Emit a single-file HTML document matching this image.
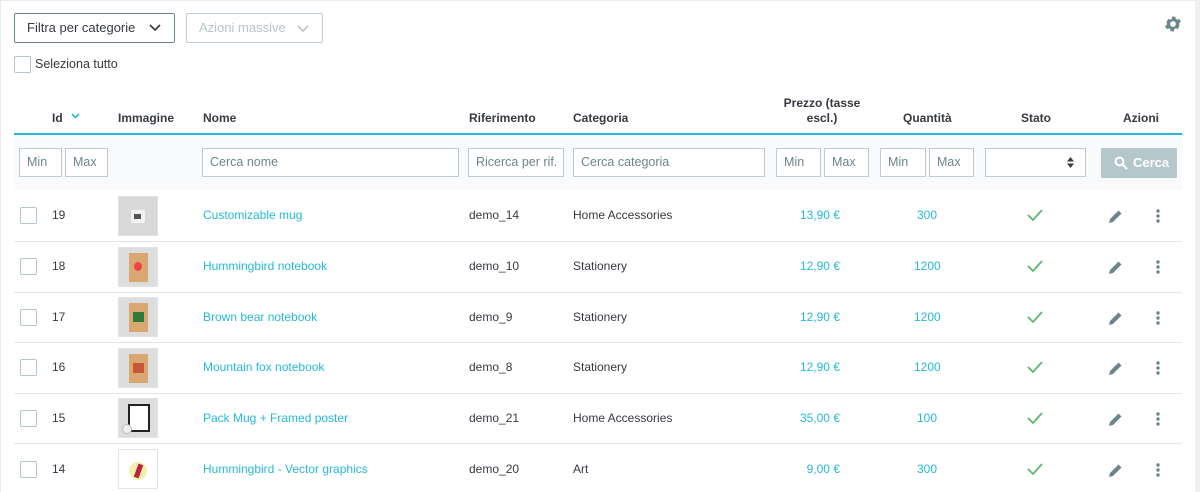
<!DOCTYPE html>
<html><head><meta charset="utf-8"><style>
*{box-sizing:border-box;margin:0;padding:0}
body{width:1200px;height:492px;overflow:hidden;background:#fff;font-family:"Liberation Sans",sans-serif;font-size:12px;color:#363a41;position:relative}
.a{position:absolute;white-space:nowrap}
.inp{position:absolute;height:29px;border:1px solid #bbcdd2;background:#fff;color:#6c868e;font-size:12.5px;padding-left:7px;line-height:27px}
.th{position:absolute;font-weight:bold;font-size:12px;color:#363a41}
.cb{position:absolute;width:17px;height:17px;border:1px solid #b3c7cd;border-radius:2px;background:#fff}
.lk{color:#25b9d7}
.pr{position:absolute;left:760px;width:80px;text-align:right;color:#25b9d7}
.sep{position:absolute;left:14px;width:1168px;height:1px;background:#dfe4e7}
.th2{position:absolute;left:118px;width:40px;height:40px;border:1px solid #dfe4e7;background:#ddd}
</style></head><body>
<div class="a" style="left:0;top:0;width:1200px;height:1px;background:#e8eaec"></div>
<div class="a" style="left:0;top:0;width:1px;height:492px;background:#e8eaec"></div>
<div class="a" style="left:1195px;top:0;width:5px;height:492px;background:#eef0f2"></div>

<div class="a" style="left:14px;top:13px;width:161px;height:30px;border:1px solid #6c868e;border-radius:2px;line-height:28px;padding-left:12px;font-size:13px;color:#363a41">Filtra per categorie</div>
<svg class="a" style="left:149px;top:24px" width="12" height="8" viewBox="0 0 12 8"><path d="M1 1l5 5 5-5" fill="none" stroke="#363a41" stroke-width="1.6"/></svg>
<div class="a" style="left:186px;top:13px;width:137px;height:30px;border:1px solid #bbcdd2;border-radius:2px;line-height:28px;padding-left:12px;font-size:13px;color:#b7c4c9">Azioni massive</div>
<svg class="a" style="left:297px;top:25px" width="12" height="8" viewBox="0 0 12 8"><path d="M1 1l5 5 5-5" fill="none" stroke="#b7c4c9" stroke-width="1.6"/></svg>
<svg class="a" style="left:1163px;top:14px" width="20" height="20" viewBox="0 0 24 24"><path fill="#6c868e" d="M19.4 13a7.5 7.5 0 000-2l2.1-1.6-2-3.5-2.5 1a7 7 0 00-1.7-1l-.4-2.7h-4l-.4 2.7a7 7 0 00-1.7 1l-2.5-1-2 3.5L4.6 11a7.5 7.5 0 000 2l-2.1 1.6 2 3.5 2.5-1a7 7 0 001.7 1l.4 2.7h4l.4-2.7a7 7 0 001.7-1l2.5 1 2-3.5zM12 15.5a3.5 3.5 0 110-7 3.5 3.5 0 010 7z"/></svg>
<div class="cb" style="left:14px;top:56px"></div>
<div class="a" style="left:35px;top:57px;font-size:12.5px">Seleziona tutto</div>

<div class="th" style="left:52px;top:111px">Id</div>
<svg class="a" style="left:71px;top:113px" width="9" height="6" viewBox="0 0 9 6"><path d="M1 1l3.5 3.5L8 1" fill="none" stroke="#25b9d7" stroke-width="1.6"/></svg>
<div class="th" style="left:118px;top:111px">Immagine</div>
<div class="th" style="left:203px;top:111px">Nome</div>
<div class="th" style="left:469px;top:111px">Riferimento</div>
<div class="th" style="left:573px;top:111px">Categoria</div>
<div class="th" style="left:772px;top:96px;width:100px;text-align:center;line-height:15px;white-space:normal">Prezzo (tasse escl.)</div>
<div class="th" style="left:903px;top:111px">Quantità</div>
<div class="th" style="left:1021px;top:111px">Stato</div>
<div class="th" style="left:1123px;top:111px">Azioni</div>
<div class="a" style="left:14px;top:133px;width:1168px;height:2px;background:#25b9d7"></div>
<div class="a" style="left:14px;top:135px;width:1168px;height:55px;background:#f8fafb"></div>

<div class="inp" style="left:19px;top:148px;width:43px">Min</div>
<div class="inp" style="left:65px;top:148px;width:43px">Max</div>
<div class="inp" style="left:202px;top:148px;width:257px">Cerca nome</div>
<div class="inp" style="left:468px;top:148px;width:96px">Ricerca per rif.</div>
<div class="inp" style="left:573px;top:148px;width:192px">Cerca categoria</div>
<div class="inp" style="left:776px;top:148px;width:45px">Min</div>
<div class="inp" style="left:824px;top:148px;width:45px">Max</div>
<div class="inp" style="left:880px;top:148px;width:46px">Min</div>
<div class="inp" style="left:929px;top:148px;width:45px">Max</div>
<div class="inp" style="left:985px;top:148px;width:101px"></div>
<svg class="a" style="left:1067px;top:157px" width="7" height="11" viewBox="0 0 7 11"><path d="M0 4.5L3.5 0 7 4.5zM0 6.5L3.5 11 7 6.5z" fill="#363a41"/></svg>
<div class="a" style="left:1101px;top:148px;width:76px;height:30px;background:#b3c7cd;border-radius:1px;color:#fff;font-weight:bold;font-size:13px;line-height:30px;padding-left:32px">Cerca</div>
<svg class="a" style="left:1114px;top:156px" width="14" height="14" viewBox="0 0 14 14"><circle cx="5.5" cy="5.5" r="4" fill="none" stroke="#fff" stroke-width="2"/><path d="M8.5 8.5L13 13" stroke="#fff" stroke-width="2.2"/></svg>

<div class="sep" style="top:241px"></div>
<div class="sep" style="top:292px"></div>
<div class="sep" style="top:342px"></div>
<div class="sep" style="top:393px"></div>
<div class="sep" style="top:443px"></div>

<div class="cb" style="left:20px;top:207px"></div><div class="a" style="left:52px;top:208px">19</div>
<div class="th2" style="top:196px;background:#d9d9d9"><div style="position:absolute;left:12px;top:13px;width:14px;height:13px;background:#f4f4f4;border-radius:2px"></div><div style="position:absolute;left:15px;top:17px;width:7px;height:5px;background:#555"></div></div>
<div class="a lk" style="left:203px;top:208px">Customizable mug</div><div class="a" style="left:469px;top:208px">demo_14</div><div class="a" style="left:573px;top:208px">Home Accessories</div>
<div class="pr" style="top:208px">13,90 €</div><div class="a lk" style="left:917px;top:208px">300</div>

<div class="cb" style="left:20px;top:258px"></div><div class="a" style="left:52px;top:259px">18</div>
<div class="th2" style="top:247px"><div style="position:absolute;left:10px;top:5px;width:19px;height:29px;background:#d9a871"></div><div style="position:absolute;left:15px;top:14px;width:8px;height:9px;border-radius:50%;background:#e44"></div></div>
<div class="a lk" style="left:203px;top:259px">Hummingbird notebook</div><div class="a" style="left:469px;top:259px">demo_10</div><div class="a" style="left:573px;top:259px">Stationery</div>
<div class="pr" style="top:259px">12,90 €</div><div class="a lk" style="left:914px;top:259px">1200</div>

<div class="cb" style="left:20px;top:309px"></div><div class="a" style="left:52px;top:310px">17</div>
<div class="th2" style="top:297px"><div style="position:absolute;left:10px;top:5px;width:19px;height:29px;background:#d9a871"></div><div style="position:absolute;left:14px;top:14px;width:11px;height:10px;background:#2d7a3a"></div></div>
<div class="a lk" style="left:203px;top:310px">Brown bear notebook</div><div class="a" style="left:469px;top:310px">demo_9</div><div class="a" style="left:573px;top:310px">Stationery</div>
<div class="pr" style="top:310px">12,90 €</div><div class="a lk" style="left:914px;top:310px">1200</div>

<div class="cb" style="left:20px;top:359px"></div><div class="a" style="left:52px;top:360px">16</div>
<div class="th2" style="top:348px"><div style="position:absolute;left:10px;top:5px;width:19px;height:29px;background:#d9a871"></div><div style="position:absolute;left:14px;top:14px;width:11px;height:10px;background:#c9553a"></div></div>
<div class="a lk" style="left:203px;top:360px">Mountain fox notebook</div><div class="a" style="left:469px;top:360px">demo_8</div><div class="a" style="left:573px;top:360px">Stationery</div>
<div class="pr" style="top:360px">12,90 €</div><div class="a lk" style="left:914px;top:360px">1200</div>

<div class="cb" style="left:20px;top:410px"></div><div class="a" style="left:52px;top:411px">15</div>
<div class="th2" style="top:398px"><div style="position:absolute;left:9px;top:5px;width:22px;height:28px;background:#fff;border:2px solid #222"></div><div style="position:absolute;left:3px;top:25px;width:10px;height:10px;border-radius:50%;background:#eee;border:1px solid #bbb"></div></div>
<div class="a lk" style="left:203px;top:411px">Pack Mug + Framed poster</div><div class="a" style="left:469px;top:411px">demo_21</div><div class="a" style="left:573px;top:411px">Home Accessories</div>
<div class="pr" style="top:411px">35,00 €</div><div class="a lk" style="left:917px;top:411px">100</div>

<div class="cb" style="left:20px;top:461px"></div><div class="a" style="left:52px;top:462px">14</div>
<div class="th2" style="top:449px;background:#fff"><div style="position:absolute;left:10px;top:12px;width:18px;height:18px;border-radius:50%;background:#f3efb0"></div><div style="position:absolute;left:17px;top:14px;width:5px;height:14px;background:#c0203a;transform:rotate(20deg)"></div></div>
<div class="a lk" style="left:203px;top:462px">Hummingbird - Vector graphics</div><div class="a" style="left:469px;top:462px">demo_20</div><div class="a" style="left:573px;top:462px">Art</div>
<div class="pr" style="top:462px">9,00 €</div><div class="a lk" style="left:917px;top:462px">300</div>

<svg style="position:absolute;left:0;top:0" width="1200" height="492">
<defs>
<g id="ic">
<path d="M1028 -1l5 5 9-10" fill="none" stroke="#5fb570" stroke-width="1.8"/>
<path d="M1110 3l8.5-8.5 3 3L1113 6l-4 1z" fill="#6c868e"/>
<circle cx="1158" cy="-5" r="1.7" fill="#6c868e"/><circle cx="1158" cy="0" r="1.7" fill="#6c868e"/><circle cx="1158" cy="5" r="1.7" fill="#6c868e"/>
</g>
</defs>
<use href="#ic" y="216"/><use href="#ic" y="267"/><use href="#ic" y="318"/><use href="#ic" y="368"/><use href="#ic" y="419"/><use href="#ic" y="470"/>
</svg>
</body></html>
